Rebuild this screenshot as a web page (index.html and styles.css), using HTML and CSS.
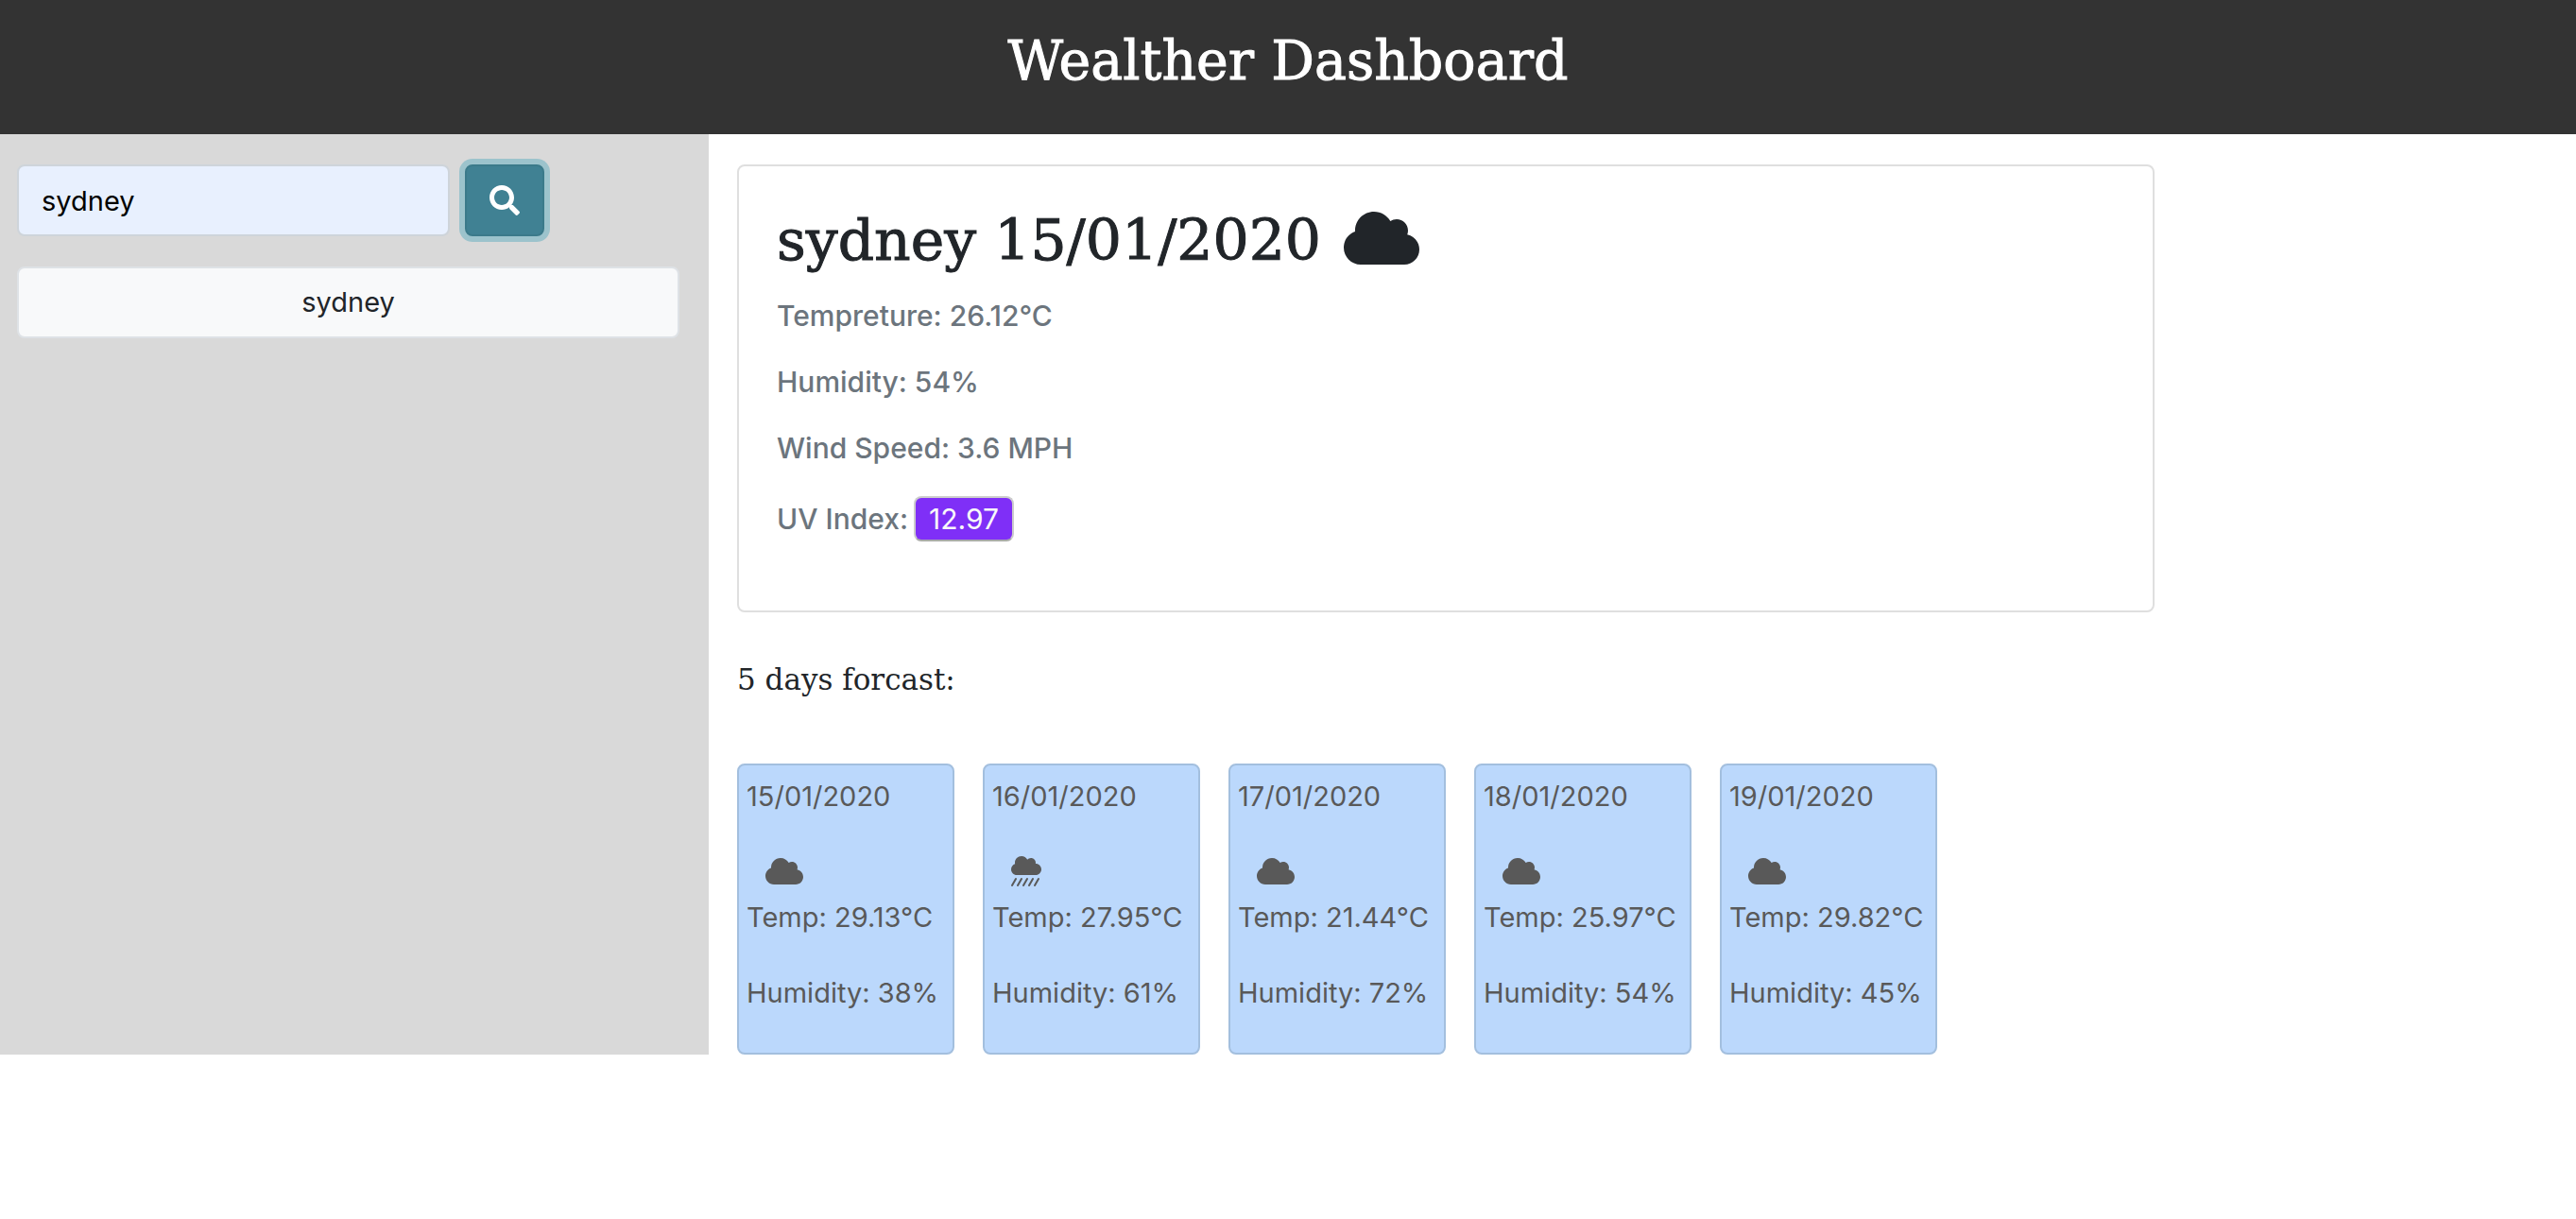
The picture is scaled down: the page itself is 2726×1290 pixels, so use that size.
FILE: index.html
```html
<!DOCTYPE html>
<html lang="en">
<head>
<meta charset="utf-8">
<meta name="viewport" content="width=device-width, initial-scale=1">
<title>Wealther Dashboard</title>
<link rel="stylesheet" href="styles.css">
</head>
<body>
<svg class="sprite" aria-hidden="true">
  <symbol id="cloud" viewBox="0 0 640 512"><path d="M537.6 226.6c4.1-10.7 6.4-22.4 6.4-34.6 0-53-43-96-96-96-19.7 0-38.1 6-53.3 16.2C367 64.2 315.3 32 256 32c-88.4 0-160 71.6-160 160 0 2.7.1 5.4.2 8.1C40.2 219.8 0 273.2 0 336c0 79.5 64.5 144 144 144h368c70.7 0 128-57.3 128-128 0-61.9-44-113.6-102.4-125.4z"/></symbol>
  <symbol id="rain" viewBox="0 0 512 512">
    <path d="M416 128c-.6 0-1.1.2-1.6.2 1.1-5.2 1.6-10.6 1.6-16.2 0-44.2-35.8-80-80-80-24.6 0-46.3 11.3-61 28.8C256.4 24.8 219.3 0 176 0 114.1 0 64 50.1 64 112c0 7.3.8 14.3 2.1 21.2C27.8 145.8 0 181.5 0 224c0 53 43 96 96 96h320c53 0 96-43 96-96s-43-96-96-96z"/>
    <path d="M80 384L16 496M176 384l-64 112M272 384l-64 112M368 384l-64 112M464 384l-64 112" fill="none" stroke="currentColor" stroke-width="32" stroke-linecap="round"/>
  </symbol>
</svg>
<header class="header"><h1 class="header-title">Wealther Dashboard</h1></header>
<div class="layout">
  <aside class="sidebar">
    <form class="search" onsubmit="return false">
      <input class="search-input" type="text" value="sydney" aria-label="City">
      <button class="search-button" type="submit" aria-label="Search">
        <svg class="search-icon" viewBox="0 0 512 512" aria-hidden="true"><path d="M505 442.7L405.3 343c-4.5-4.5-10.6-7-17-7H372c27.6-35.3 44-79.7 44-128C416 93.1 322.9 0 208 0S0 93.1 0 208s93.1 208 208 208c48.3 0 92.7-16.4 128-44v16.3c0 6.4 2.5 12.5 7 17l99.7 99.7c9.4 9.4 24.6 9.4 33.9 0l28.3-28.3c9.4-9.4 9.4-24.6.1-34zM208 336c-70.7 0-128-57.2-128-128 0-70.7 57.2-128 128-128 70.7 0 128 57.2 128 128 0 70.7-57.2 128-128 128z"/></svg>
      </button>
    </form>
    <button class="history-item" type="button">sydney</button>
  </aside>
  <main class="main">
    <section class="current">
      <h2 class="current-title">sydney 15/01/2020 <svg class="icon-large" aria-hidden="true"><use href="#cloud"/></svg></h2>
      <p class="reading">Tempreture: 26.12°C</p>
      <p class="reading">Humidity: 54%</p>
      <p class="reading">Wind Speed: 3.6 MPH</p>
      <p class="reading reading-uv">UV Index: <button class="uv" type="button">12.97</button></p>
    </section>
    <h3 class="forecast-title">5 days forcast:</h3>
    <section class="forecast">
      <article class="day"><p>15/01/2020</p><svg class="icon-cloud" aria-hidden="true"><use href="#cloud"/></svg><p>Temp: 29.13°C</p><p>Humidity: 38%</p></article>
      <article class="day"><p>16/01/2020</p><svg class="icon-rain" aria-hidden="true"><use href="#rain"/></svg><p>Temp: 27.95°C</p><p>Humidity: 61%</p></article>
      <article class="day"><p>17/01/2020</p><svg class="icon-cloud" aria-hidden="true"><use href="#cloud"/></svg><p>Temp: 21.44°C</p><p>Humidity: 72%</p></article>
      <article class="day"><p>18/01/2020</p><svg class="icon-cloud" aria-hidden="true"><use href="#cloud"/></svg><p>Temp: 25.97°C</p><p>Humidity: 54%</p></article>
      <article class="day"><p>19/01/2020</p><svg class="icon-cloud" aria-hidden="true"><use href="#cloud"/></svg><p>Temp: 29.82°C</p><p>Humidity: 45%</p></article>
    </section>
  </main>
</div>
</body>
</html>
```
FILE: styles.css
```css
* { box-sizing: border-box; }
body {
  margin: 0;
  background: #fff;
  color: #212529;
  font: 400 29px/48px Inter, "Liberation Sans", sans-serif;
}
h1, h2, h3, p { margin: 0; }
svg { fill: currentColor; }
.sprite { display: none; }
.header { padding: 26px 30px 40px; background: #333; color: #fff; text-align: center; }
.header-title, .current-title, .forecast-title { font-family: "DejaVu Serif", serif; font-weight: 400; }
.header-title, .current-title { -webkit-text-stroke: 1px currentColor; }
.header-title { font-size: 57px; line-height: 76px; }
.layout { display: flex; }
.sidebar { flex: 0 0 750px; padding: 32px 31px 32px 18px; background: #d9d9d9; }
.search { display: flex; gap: 16px; margin-bottom: 32px; }
.search-input {
  width: 458px;
  height: 76px;
  padding: 12px 24px;
  border: 2px solid #ced4da;
  border-radius: 8px;
  background: #e8f0fe;
  color: #000;
  font: inherit;
}
.search-button {
  display: flex;
  align-items: center;
  justify-content: center;
  width: 84px;
  height: 76px;
  padding: 0;
  border: 2px solid #3b7a8a;
  border-radius: 8px;
  background: #408193;
  color: #fff;
  box-shadow: 0 0 0 6px #9cc3cc;
}
.search-icon { width: 32px; height: 32px; }
.history-item {
  display: block;
  width: 100%;
  height: 76px;
  padding: 12px 24px;
  border: 2px solid #dee2e6;
  border-radius: 8px;
  background: #f8f9fa;
  color: #212529;
  font: inherit;
}
.main { flex: 1; min-width: 0; padding: 32px 30px 0; }
.current {
  display: flex;
  flex-direction: column;
  gap: 32px;
  max-width: 1500px;
  padding: 40px 40px 73px;
  border: 2px solid #dfdfdf;
  border-radius: 8px;
}
.current-title { display: flex; align-items: center; gap: 24px; margin-bottom: -10px; font-size: 60px; line-height: 77px; }
.icon-large { width: 80px; height: 64px; margin-bottom: 6px; stroke: none; }
.reading { color: #6c757d; font-size: 30px; font-weight: 500; line-height: 38px; }
.reading-uv { display: flex; align-items: center; gap: 6px; }
.uv {
  padding: 2px 14px;
  border: 2px solid #ccc;
  border-bottom-color: #aaa;
  border-radius: 8px;
  background: #7f2ff7;
  color: #f8f9fa;
  font: 400 30px/40px Inter, "Liberation Sans", sans-serif;
}
.forecast-title { margin: 51px 0 69px; font-size: 31px; line-height: 40px; }
.forecast { display: flex; gap: 30px; }
.day {
  display: flex;
  flex-direction: column;
  width: 230px;
  padding: 9px 8px 39px;
  border: 2px solid #a3bfde;
  border-radius: 8px;
  background: #bbd8fc;
  color: #595959;
  white-space: nowrap;
}
.day p + p { margin-top: 32px; }
.icon-cloud, .icon-rain { height: 32px; margin: 39px 20px 9px; }
.icon-cloud { width: 40px; }
.icon-rain { width: 32px; }
```
